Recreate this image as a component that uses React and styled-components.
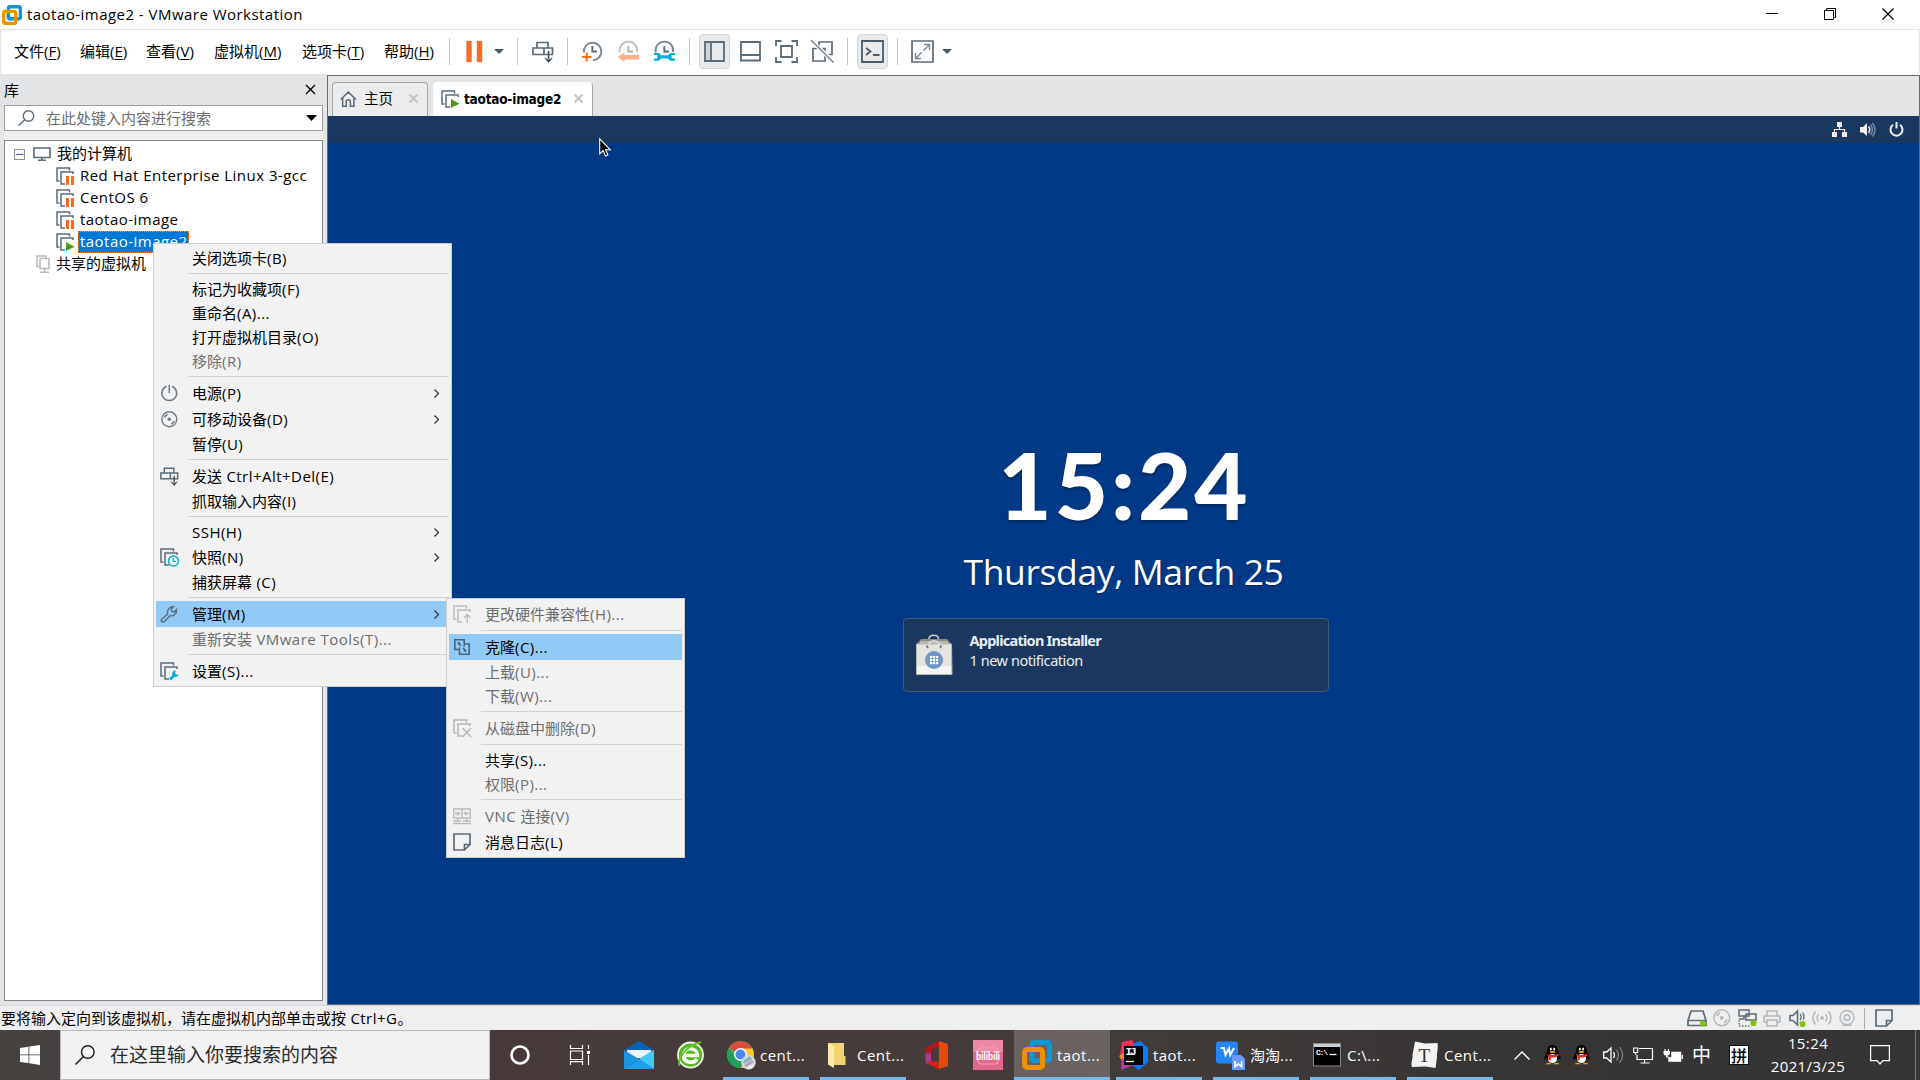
import React from 'react';
import styled, { createGlobalStyle } from 'styled-components';

const UI = '"Open Sans", "Noto Sans CJK SC", sans-serif';
const SLATE = '#5b6b78';
const ORANGE = '#ff6a1c';
const CYAN = '#00b2d6';

const Global = createGlobalStyle`
  * { box-sizing: border-box; }
  html, body { margin: 0; padding: 0; overflow: hidden; }
  body { font-family: ${UI}; font-size: 15px; color: #000; background: #fff; }
`;

const Screen = styled.div`
  position: relative;
  display: flex;
  flex-direction: column;
  width: 1920px;
  height: 1080px;
  overflow: hidden;
`;

const Svg = styled.svg`
  display: block;
  flex: none;
  overflow: visible;
  margin-left: ${(p) => p.$l || 0}px;
  margin-top: ${(p) => p.$t || 0}px;
`;

function Icon({ w, h = w, l, t, children, ...rest }) {
  return (
    <Svg width={w} height={h} viewBox={`0 0 ${w} ${h}`} fill="none" $l={l} $t={t} {...rest}>
      {children}
    </Svg>
  );
}

const Label = styled.span`
  flex: none;
  white-space: pre;
  font-size: ${(p) => p.$size || 15}px;
  line-height: 22px;
  margin-left: ${(p) => p.$l || 0}px;
  margin-bottom: ${(p) => p.$b || 0}px;
  color: ${(p) => p.$color || 'inherit'};
`;

/* Latin runs are set a little looser than the Chinese ones. */
const Latin = styled.span`
  letter-spacing: 0.47px;
`;

const mixed = (text) =>
  text.split(/([\x20-\x7e]+)/).map((run, i) => (i % 2 ? <Latin key={i}>{run}</Latin> : run));

/* ---------- title bar ---------- */

const TitleBar = styled.header`
  display: flex;
  align-items: center;
  height: 29px;
  flex: none;
  padding-left: 2px;
  background: #fff;
`;

const WindowButtons = styled.div`
  display: flex;
  margin-left: auto;
  padding: 0 26px 1px 0;
  gap: 46px;
`;

function VmwareLogo({ size, l, t }) {
  return (
    <Svg width={size} height={size} viewBox="0 0 30 30" fill="none" $l={l} $t={t}>
      <rect x="9.6" y="2.6" width="18" height="18" rx="2.6" stroke="#0e97d6" strokeWidth="5" />
      <rect x="2.6" y="9.6" width="18" height="18" rx="2.6" stroke="#f29100" strokeWidth="5" />
      <path d="M9.6 12.500V18a2.6 2.6 0 0 0 2.6 2.6H15" stroke="#0e97d6" strokeWidth="5" />
    </Svg>
  );
}

/* ---------- menu and tool bar ---------- */

const MenuBar = styled.nav`
  display: flex;
  align-items: center;
  flex: none;
  height: 45px;
  padding: 0 0 1px 13px;
  border: 1px solid #e2e2e2;
  border-bottom: 0;
  background: #fff;
`;

const MenuEntry = styled.span`
  flex: none;
  width: ${(p) => p.$w}px;
  margin-bottom: 2px;
  line-height: 22px;
  white-space: nowrap;
  u { text-underline-offset: 2px; text-decoration-thickness: 1px; }
`;

const Divider = styled.i`
  flex: none;
  width: 1px;
  height: 27px;
  margin-left: ${(p) => p.$l || 0}px;
  background: #c6c6c8;
`;

const Toggle = styled.span`
  display: flex;
  align-items: center;
  justify-content: center;
  flex: none;
  width: 31px;
  height: 35px;
  margin-left: ${(p) => p.$l}px;
  border: 1px solid #d4d5d7;
  border-radius: 4px;
  background: #e9eaec;
`;

const Caret = ({ l, color = '#4b5a66', w = 10, h = 5 }) => (
  <Icon w={w} h={h} l={l}>
    <path d={`M0 0H${w}L${w / 2} ${h}Z`} fill={color} />
  </Icon>
);

function SendKeys({ w = 22, l }) {
  return (
    <Svg width={w} height={w} viewBox="0 0 22 22" fill="none" $l={l}>
      <path d="M5 6.500V1.500h11v5M1 7h19.500v6.500H1zM12 7v6.500" stroke={SLATE} strokeWidth="1.700" />
      <path d="M16.500 10v8" stroke="#44535f" strokeWidth="1.600" />
      <path d="M12 16.500l4.500 2 4.500-2-4.500 5.500z" fill="#44535f" />
    </Svg>
  );
}

function ClockIcon({ kind, l }) {
  const faded = kind === 'back';
  return (
    <Icon w={21} h={21} l={l}>
      {kind === 'add' ? (
        <path d="M1.800 11.500A8.800 8.800 0 1 1 11 19.300" stroke="#7c8790" strokeWidth="1.900" />
      ) : (
        <path d="M1.800 11.500A8.800 8.800 0 1 1 19 11" stroke={faded ? '#bcc1c5' : '#7c8790'} strokeWidth="1.900" />
      )}
      <path d="M10.300 5V10.500H15" stroke={faded ? '#a9b0b5' : SLATE} strokeWidth="1.800" />
      {kind === 'add' && <path d="M0 16h9.500M4.700 11.500v9" stroke={ORANGE} strokeWidth="1.900" />}
      {faded && <path d="M0 16l6.500-5v3H21v4.500H6.500V21z" fill="#ffb08c" />}
      {kind === 'manage' && (
        <path d="M0 12h5l2 2.300h7l2-2.300h5v2h-3.300v3.500H21v2.300h-5l-2-2.300H7l-2 2.300H0v-2.300h3.300V14H0z" fill={CYAN} />
      )}
    </Icon>
  );
}

function ToolBar() {
  return (
    <>
      <Divider />
      <Icon w={17} h={21} l={16}>
        <path d="M.5 0h5v21h-5zM11 0h5v21h-5z" fill={ORANGE} stroke="#c98b6a" strokeWidth=".5" />
      </Icon>
      <Caret l={11} />
      <Divider $l={13} />
      <SendKeys l={14} />
      <Divider $l={13} />
      <ClockIcon kind="add" l={14} />
      <ClockIcon kind="back" l={15} />
      <ClockIcon kind="manage" l={15} />
      <Divider $l={14} />
      <Toggle $l={9}>
        <Icon w={21} h={21}>
          <path d="M1 1h19v19H1zM7 1v19" stroke={SLATE} strokeWidth="1.800" />
          <path d="M2 2h4v17H2z" fill="#d3d6d9" />
        </Icon>
      </Toggle>
      <Icon w={21} h={21} l={10}>
        <path d="M1 1h19v18.500H1zM1 14h19" stroke={SLATE} strokeWidth="1.800" />
      </Icon>
      <Icon w={23} h={23} l={14}>
        <path d="M1 6V1h5.500M16.500 1H22v5M22 17v5h-5.500M6.500 22H1v-5" stroke={SLATE} strokeWidth="1.800" />
        <path d="M6 6h11v11H6z" stroke={SLATE} strokeWidth="1.800" />
      </Icon>
      <Icon w={23} h={23} l={13}>
        <path d="M8 6V2h13v12.500h-5M2 8.500h12v12.500H2zM9 9h5v5" stroke={SLATE} strokeWidth="1.700" />
        <path d="M1 1l21.500 21" stroke="#fff" strokeWidth="4" />
        <path d="M0 0l22.500 22.500" stroke="#7c8790" strokeWidth="1.600" />
      </Icon>
      <Divider $l={13} />
      <Toggle $l={9}>
        <Icon w={23} h={23}>
          <path d="M1 1h21v21H1z" stroke="#4b5c69" strokeWidth="1.800" />
          <path d="M5 8l4.500 3.500L5 15M12 15h6.500" stroke="#4b5c69" strokeWidth="1.800" />
        </Icon>
      </Toggle>
      <Divider $l={9} />
      <Icon w={23} h={23} l={13}>
        <path d="M1 1h21v21H1z" stroke={SLATE} strokeWidth="1.700" />
        <path d="M13 4.500h5.500V10M18.500 4.500L12.500 10.500M10 18.500H4.500V13M4.500 18.500l6-6" stroke="#7c8790" strokeWidth="1.400" />
      </Icon>
      <Caret l={8} />
    </>
  );
}

/* ---------- library ---------- */

const Body = styled.div`
  display: flex;
  flex: none;
  height: 931px;
`;

const Library = styled.aside`
  display: flex;
  flex-direction: column;
  flex: none;
  width: 327px;
  padding: 0 4px 4px;
  background: #e3e4e6;
`;

const LibraryHead = styled.div`
  display: flex;
  align-items: center;
  justify-content: space-between;
  height: 31px;
  padding-right: 8px;
`;

const SearchField = styled.div`
  display: flex;
  align-items: center;
  height: 26px;
  padding-left: 13px;
  border: 1px solid #9d9fa3;
  background: #fff;
`;

const SearchGap = styled.div`
  height: 9px;
  background: #efefef;
`;

const Tree = styled.div`
  flex: 1;
  padding-top: 2px;
  border: 1px solid #828790;
  background: #fff;
`;

const TreeRow = styled.div`
  display: flex;
  align-items: center;
  height: 22px;
  padding-left: ${(p) => p.$indent}px;
`;

const Expander = styled.span`
  display: flex;
  align-items: center;
  justify-content: center;
  width: 11px;
  height: 11px;
  margin-right: 8px;
  border: 1px solid #919191;
  background: #fafafa;
  &::after { content: ''; width: 7px; height: 1px; background: #3b5bb5; }
`;

const TreeName = styled.span`
  margin-left: 4px;
  padding: 0 1px 0 2px;
  height: 22px;
  line-height: 21px;
  white-space: nowrap;
  color: ${(p) => (p.$selected ? '#fff' : '#000')};
  background: ${(p) => (p.$selected ? '#0078d7' : 'transparent')};
  outline: ${(p) => (p.$selected ? '1px dotted #ff8728' : 'none')};
  outline-offset: -1px;
`;

function VmIcon({ state, l = 0, color = SLATE }) {
  return (
    <Icon w={18} h={18} l={l}>
      <path d="M13.500 3.500V1H1v13h2.500" stroke={color} strokeWidth="1.500" />
      <path d="M17 7V5H5v12h4" stroke={color} strokeWidth="1.500" />
      {state === 'paused' && <path d="M10 9h3v9h-3zM15 9h3v9h-3z" fill={ORANGE} />}
      {state === 'running' && <path d="M10 9l8.500 4.700L10 18z" fill="#4a9a12" />}
      {state === 'upgrade' && (
        <>
          <path d="M10 8h9v10h-9z" fill="#f2f2f2" />
          <path d="M14.200 18v-8M11 12.800l3.200-3.300 3.200 3.300" stroke={color} strokeWidth="1.500" />
        </>
      )}
      {state === 'remove' && (
        <>
          <path d="M9 8h9v10H9z" fill="#f2f2f2" />
          <path d="M9.500 9l8.500 9M18 9l-8.500 9" stroke={color} strokeWidth="1.400" />
        </>
      )}
      {state === 'snapshot' && (
        <>
          <circle cx="13.500" cy="13" r="5" fill="#f2f2f2" stroke={CYAN} strokeWidth="1.500" />
          <path d="M13.300 10v3.300H16" stroke={CYAN} strokeWidth="1.300" />
        </>
      )}
      {state === 'settings' && (
        <>
          <path d="M9 8.500h9v10H9z" fill="#f2f2f2" />
          <path d="M10 17.500l5-5" stroke={CYAN} strokeWidth="2.600" />
          <path d="M16 8.700a3.200 3.200 0 1 0 2.500 3.300l-2 .8-1.500-1.500z" fill={CYAN} />
        </>
      )}
    </Icon>
  );
}

const machines = [
  { name: 'Red Hat Enterprise Linux 3-gcc', state: 'paused' },
  { name: 'CentOS 6', state: 'paused' },
  { name: 'taotao-image', state: 'paused' },
  { name: 'taotao-image2', state: 'running', selected: true },
];

function LibraryPane() {
  return (
    <Library>
      <LibraryHead>
        <Label>库</Label>
        <Icon w={9} h={9}>
          <path d="M0 0l9 9M9 0L0 9" stroke="#000" strokeWidth="1.300" />
        </Icon>
      </LibraryHead>
      <SearchField>
        <Icon w={17} h={16}>
          <circle cx="10.500" cy="6" r="5.200" stroke={SLATE} strokeWidth="1.400" />
          <path d="M6.500 10L.5 15.500" stroke={SLATE} strokeWidth="1.500" />
        </Icon>
        <Label $l={11} $color="#6d6d6d">在此处键入内容进行搜索</Label>
        <Caret l={95} w={11} h={6} color="#000" />
      </SearchField>
      <SearchGap />
      <Tree>
        <TreeRow $indent={9}>
          <Expander />
          <Icon w={18} h={14}>
            <path d="M1 1h16v9.500H1zM5 13.300h8M9 10.500v3" stroke={SLATE} strokeWidth="1.600" />
          </Icon>
          <TreeName>我的计算机</TreeName>
        </TreeRow>
        {machines.map((m) => (
          <TreeRow key={m.name} $indent={51}>
            <VmIcon state={m.state} />
            <TreeName $selected={m.selected}>{mixed(m.name)}</TreeName>
          </TreeRow>
        ))}
        <TreeRow $indent={31}>
          <Icon w={14} h={18}>
            <path d="M3 11.500H1V1h9v2M4 3.500h9v10H4zM8.500 13.500V17M4 17.300h9" stroke="#b3b9bd" strokeWidth="1.500" />
          </Icon>
          <TreeName>共享的虚拟机</TreeName>
        </TreeRow>
      </Tree>
    </Library>
  );
}

/* ---------- console ---------- */

const Console = styled.main`
  display: flex;
  flex-direction: column;
  flex: 1;
  margin-top: 1px;
  border: 1px solid #69676b;
`;

const Tabs = styled.div`
  display: flex;
  align-items: flex-end;
  flex: none;
  height: 40px;
  padding-left: 4px;
  background: #e3e4e6;
`;

const Tab = styled.div`
  display: flex;
  align-items: center;
  width: ${(p) => p.$w}px;
  height: 34px;
  margin-right: 5px;
  padding: 0 0 2px 7px;
  border: 1px solid ${(p) => (p.$active ? '#fff' : '#a4a6aa')};
  border-right-color: #a4a6aa;
  border-bottom: 0;
  border-radius: 4px 4px 0 0;
  background: ${(p) => (p.$active ? '#fff' : '#ebeced')};
`;

const TabTitle = styled.b`
  flex: none;
  width: 97px;
  margin-left: 5px;
  font: 700 13.500px/20px "DejaVu Sans Condensed", "DejaVu Sans", sans-serif;
  font-stretch: condensed;
  letter-spacing: -0.22px;
  white-space: nowrap;
`;

const CloseX = ({ l }) => (
  <Icon w={9} h={9} l={l}>
    <path d="M.5 .5l8 8M8.500 .5l-8 8" stroke="#c3c4c6" strokeWidth="1.900" />
  </Icon>
);

const Guest = styled.section`
  display: flex;
  flex-direction: column;
  align-items: center;
  flex: 1;
  background: #003a87;
  color: #fff;
`;

const GuestBar = styled.div`
  display: flex;
  align-items: center;
  justify-content: flex-end;
  align-self: stretch;
  flex: none;
  height: 27px;
  padding-right: 15px;
  gap: 13px;
  background: #1a385f;
`;

const Clock = styled.div`
  margin: 287px 0 0 2px;
  height: 110px;
  line-height: 110px;
  font-family: Lato, sans-serif;
  font-weight: 900;
  font-size: 92px;
  letter-spacing: 3px;
  text-shadow: 0 2px 3px rgba(0, 0, 0, 0.35);
`;

const DateLine = styled.div`
  height: 44px;
  margin-top: 9px;
  line-height: 44px;
  font-family: "Open Sans", sans-serif;
  font-size: 35.500px;
  letter-spacing: -0.38px;
  white-space: nowrap;
  text-shadow: 0 1px 2px rgba(0, 0, 0, 0.4);
`;

const Notice = styled.div`
  display: flex;
  width: 426px;
  height: 74px;
  margin: 25px 16px 0 0;
  padding: 15px 0 0 12px;
  border: 1px solid #41587b;
  border-radius: 4px;
  background: #1a385f;
`;

const NoticeText = styled.div`
  display: flex;
  flex-direction: column;
  margin: -4px 0 0 18px;
  font-family: "Noto Sans", sans-serif;
  font-size: 14.500px;
  line-height: 20px;
  color: #e9ecef;
  b { letter-spacing: -0.75px; font-weight: 700; }
  span { letter-spacing: -0.45px; }
`;

function ShoppingBag() {
  return (
    <Icon w={36} h={41}>
      <path d="M5 5h26l5 6H0z" fill="#8d8d88" />
      <path d="M4 7h28v4H4z" fill="#b9b9b4" />
      <path d="M.5 10h35L36 40.500H.5z" fill="#e4e4e0" stroke="#b7b8b0" />
      <path d="M1 32h34v8H1z" fill="#f5f5f3" />
      <path d="M13 5c0-5 9.500-5 9.500 0" stroke="#c9cac4" strokeWidth="1.600" />
      <path d="M12 13c0-8 12-8 12 0" stroke="#d9dad5" strokeWidth="2" />
      <path d="M10.500 11.500l1.500 2.500M25.500 11.500L24 14" stroke="#777" strokeWidth="1.600" />
      <circle cx="18" cy="26" r="9" fill="#7296c8" />
      {[0, 1, 2].map((r) => [0, 1, 2].map((c) => (
        <rect key={`${r}${c}`} x={14 + c * 3} y={22 + r * 3} width="2.200" height="2.200" fill="#fff" />
      )))}
    </Icon>
  );
}

function ConsolePane() {
  return (
    <Console>
      <Tabs>
        <Tab $w={96}>
          <Icon w={17} h={16}>
            <path d="M.7 8.500L8.300 1l7.600 7.500M2.700 7v8.200h3.500v-4.500c0-2.600 4.200-2.600 4.200 0v4.500h3.500V7" stroke={SLATE} strokeWidth="1.500" />
          </Icon>
          <Label $l={7} $size={14.5}>主页</Label>
          <CloseX l={16} />
        </Tab>
        <Tab $w={160} $active>
          <VmIcon state="running" />
          <TabTitle>taotao-image2</TabTitle>
          <CloseX l={13} />
        </Tab>
      </Tabs>
      <Guest>
        <GuestBar>
          <Icon w={15} h={15}>
            <path d="M5 0h5v5H5zM0 10h5v5H0zM10 10h5v5h-5z" fill="#f0f0ee" />
            <path d="M7.500 5v3M2.500 10V7.500h10V10" stroke="#f0f0ee" strokeWidth="1.200" />
          </Icon>
          <Icon w={16} h={14}>
            <path d="M0 4h3l4-4v13L3 9.500H0z" fill="#f0f0ee" />
            <path d="M8.500 3.500c1.500 2 1.500 4.500 0 6.500" stroke="#f0f0ee" strokeWidth="1.500" />
            <path d="M10.500 1.500c2.500 3 2.500 7.500 0 10.500M12.500 0c3.300 4 3.300 9.500 0 13.500" stroke="#7688a0" strokeWidth="1.500" />
          </Icon>
          <Icon w={15} h={15}>
            <path d="M4 2.800a6 6 0 1 0 7 0M7.500 0v6.500" stroke="#f0f0ee" strokeWidth="2" />
          </Icon>
        </GuestBar>
        <Clock>15:24</Clock>
        <DateLine>Thursday, March 25</DateLine>
        <Notice>
          <ShoppingBag />
          <NoticeText>
            <b>Application Installer</b>
            <span>1 new notification</span>
          </NoticeText>
        </Notice>
      </Guest>
    </Console>
  );
}

/* ---------- context menus ---------- */

const Menu = styled.div`
  position: absolute;
  left: ${(p) => p.$x}px;
  top: ${(p) => p.$y}px;
  width: ${(p) => p.$w}px;
  padding: 2px;
  border: 1px solid #cccccc;
  background: #f2f2f2;
`;

const MenuRow = styled.div`
  display: flex;
  align-items: center;
  height: ${(p) => (p.$tall ? 26 : 24)}px;
  padding-right: 10px;
  color: ${(p) => (p.$off ? '#6d6d6d' : '#000')};
  background: ${(p) => (p.$hot ? '#91c9f7' : 'transparent')};
`;

const IconCell = styled.span`
  display: flex;
  align-items: center;
  flex: none;
  width: ${(p) => p.$w}px;
  padding-left: 4px;
`;

const RowText = styled.span`
  flex: 1;
  margin-bottom: 1px;
  line-height: 24px;
  white-space: pre;
`;

const Rule = styled.div`
  height: 7px;
  margin-left: 32px;
  padding-top: 3px;
  &::after { content: ''; display: block; height: 1px; background: #d2d2d2; }
`;

const PowerIcon = () => (
  <Icon w={17} h={17} l={1}>
    <path d="M5.500 1.300a7.400 7.400 0 1 0 5.500 0M8.300 0v8" stroke="#6f7c87" strokeWidth="1.500" />
  </Icon>
);

const DiscIcon = ({ color = '#6f7c87', size = 17, l = 1 }) => (
  <Svg width={size} height={size} viewBox="0 0 17 17" fill="none" $l={l}>
    <circle cx="8.300" cy="8.300" r="7.500" stroke={color} strokeWidth="1.400" />
    <circle cx="8.300" cy="8.300" r="1.800" fill={color} />
    <path d="M3.500 6.500a5 5 0 0 1 3-3M13.200 10a5 5 0 0 1-3 3" stroke={color} strokeWidth="1.600" />
  </Svg>
);

const WrenchIcon = () => (
  <Icon w={18} h={18}>
    <path
      d="M1.500 14.500l6-5.500c-.8-3.500 1.800-7.500 6-7.500l-2.300 2.700.8 2.300 2.300.5 2.200-2.500c.6 4-3 7-6.500 6.300l-5.300 5.400c-2 1.800-4.500-.3-3.200-1.700z"
      stroke={SLATE} strokeWidth="1.400"
    />
  </Icon>
);

const CloneIcon = () => (
  <Icon w={16} h={16} l={1}>
    <path d="M5.500 10.500H.800V.800h9.400V5M10.200 5h5v10.200H5.500v-4.700" stroke="#48637a" strokeWidth="1.600" />
    <path d="M3.200 3.200h3v3zM12.800 12.800h-3v-3z" fill="#48637a" />
    <path d="M4 4l3 3M9 9l3 3" stroke="#48637a" strokeWidth="1.600" />
    <path d="M10.200 5v3M5.500 10.500v-2" stroke="#48637a" strokeWidth="1.300" />
  </Icon>
);

const VncIcon = () => (
  <Icon w={18} h={16}>
    <path d="M.8 1h16.400v9H.8zM9 1v9" stroke="#b9bcbe" strokeWidth="1.500" />
    <path d="M2 5.500h4.500M16 5.500h-4.500M4.500 3.500l2 2-2 2M13.500 3.500l-2 2 2 2M4.500 10v3M13.500 10v3M0 13h8M10 13h8M0 15.500h18" stroke="#b9bcbe" strokeWidth="1.300" />
  </Icon>
);

const NoteIcon = () => (
  <Icon w={18} h={18}>
    <path d="M1 1h16v10.500L11.500 17H1zM17 11.500h-5.500V17" stroke={SLATE} strokeWidth="1.700" />
  </Icon>
);

const contextItems = [
  { t: '关闭选项卡(B)' }, null,
  { t: '标记为收藏项(F)' }, { t: '重命名(A)...' }, { t: '打开虚拟机目录(O)' }, { t: '移除(R)', off: true }, null,
  { t: '电源(P)', icon: <PowerIcon />, more: true },
  { t: '可移动设备(D)', icon: <DiscIcon />, more: true },
  { t: '暂停(U)' }, null,
  { t: '发送 Ctrl+Alt+Del(E)', icon: <SendKeys w={19} /> },
  { t: '抓取输入内容(I)' }, null,
  { t: 'SSH(H)', more: true },
  { t: '快照(N)', icon: <VmIcon state="snapshot" />, more: true },
  { t: '捕获屏幕 (C)' }, null,
  { t: '管理(M)', icon: <WrenchIcon />, more: true, hot: true },
  { t: '重新安装 VMware Tools(T)...', off: true }, null,
  { t: '设置(S)...', icon: <VmIcon state="settings" /> },
];

const manageItems = [
  { t: '更改硬件兼容性(H)...', off: true, icon: <VmIcon state="upgrade" color="#b9bcbe" /> }, null,
  { t: '克隆(C)...', hot: true, icon: <CloneIcon /> },
  { t: '上载(U)...', off: true }, { t: '下载(W)...', off: true }, null,
  { t: '从磁盘中删除(D)', off: true, icon: <VmIcon state="remove" color="#b3b6b8" /> }, null,
  { t: '共享(S)...' }, { t: '权限(P)...', off: true }, null,
  { t: 'VNC 连接(V)', off: true, icon: <VncIcon /> },
  { t: '消息日志(L)', icon: <NoteIcon /> },
];

function PopupMenu({ x, y, w, items }) {
  return (
    <Menu $x={x} $y={y} $w={w}>
      {items.map((it, i) =>
        it === null ? (
          <Rule key={i} />
        ) : (
          <MenuRow key={i} $tall={!!it.icon} $off={it.off} $hot={it.hot}>
            <IconCell $w={36}>{it.icon}</IconCell>
            <RowText>{mixed(it.t)}</RowText>
            {it.more && (
              <Icon w={5} h={9}>
                <path d="M.5 .5l4 4-4 4" stroke="#333" strokeWidth="1.200" />
              </Icon>
            )}
          </MenuRow>
        ),
      )}
    </Menu>
  );
}

const Pointer = styled(Svg)`
  position: absolute;
  left: 599px;
  top: 138px;
`;

/* ---------- status bar ---------- */

const StatusBar = styled.footer`
  display: flex;
  align-items: center;
  flex: none;
  height: 25px;
  padding: 0 27px 0 1px;
  border-top: 1px solid #d7d8da;
  background: #efefef;
`;

const DeviceIcons = styled.div`
  display: flex;
  align-items: center;
  margin-left: auto;
`;

const OnDot = ({ x, y }) => <circle cx={x} cy={y} r="3.100" fill="#7ec60d" />;
const PALE = '#b0b7bc';

const StatusSplit = styled.i`
  width: 1px;
  height: 21px;
  margin: 0 10px 0 9px;
  background: #a9abad;
`;

function Devices() {
  return (
    <DeviceIcons>
      <Icon w={20} h={17}>
        <path d="M1 10.500L4 1h12l3 9.500M1 10.500h18V15.500H1z" stroke={SLATE} strokeWidth="1.700" />
        <OnDot x={16} y={13.5} />
      </Icon>
      <DiscIcon color={PALE} size={18} l={6} />
      <Icon w={19} h={18} l={7}>
        <path d="M1 1h10v6H1zM6 7v3H1M8 5h10v6H8z" stroke={SLATE} strokeWidth="1.500" />
        <path d="M1 11v6h10" stroke={SLATE} strokeWidth="1.300" strokeDasharray="1.500 1.500" />
        <OnDot x={15.5} y={14} />
      </Icon>
      <Icon w={18} h={17} l={6}>
        <path d="M4 6V1h10v5M4 12H1V6h16v6h-3M4 10h10v6H4z" stroke={PALE} strokeWidth="1.500" />
      </Icon>
      <Icon w={18} h={17} l={8}>
        <path d="M1 5.500h3L8.500 1v14L4 10.500H1z" stroke={SLATE} strokeWidth="1.600" />
        <path d="M11 4c1.500 2 1.500 4 0 6M13.500 2.500c2 3 2 5 .5 7" stroke={SLATE} strokeWidth="1.300" />
        <OnDot x={13.5} y={14} />
      </Icon>
      <Icon w={20} h={14} l={5}>
        <circle cx="10" cy="7" r="1.800" fill={PALE} />
        <path d="M6.500 3.500c-1.800 2-1.800 5 0 7M13.500 3.500c1.800 2 1.800 5 0 7M3.500 .5c-3.300 3.500-3.300 9.500 0 13M16.500 .5c3.300 3.500 3.300 9.500 0 13" stroke={PALE} strokeWidth="1.500" />
      </Icon>
      <Icon w={16} h={16} l={7}>
        <circle cx="8" cy="7.500" r="7" stroke={PALE} strokeWidth="1.400" />
        <circle cx="8" cy="7.500" r="2.800" stroke={PALE} strokeWidth="1.500" />
        <path d="M3 15.300h10" stroke={PALE} strokeWidth="1.300" />
      </Icon>
      <StatusSplit />
      <NoteIcon />
    </DeviceIcons>
  );
}

/* ---------- taskbar ---------- */

const Taskbar = styled.footer`
  display: flex;
  flex: none;
  height: 50px;
  color: #fff;
  background: linear-gradient(90deg, #454340 0, #454140 60px, #47393a 490px, #463b3b 800px, #403b39 1200px, #383535 1450px, #353334 1920px);
`;

const Start = styled.div`
  display: flex;
  align-items: center;
  justify-content: center;
  width: 60px;
`;

const TaskSearch = styled.div`
  display: flex;
  align-items: center;
  width: 430px;
  padding-left: 14px;
  border: 1px solid #b9b9b9;
  background: #f2f2f2;
`;

const Cell = styled.div`
  display: flex;
  align-items: center;
  flex: none;
  width: ${(p) => p.$w}px;
`;

const Task = styled.div`
  display: flex;
  align-items: center;
  flex: none;
  width: ${(p) => p.$w || 86}px;
  margin-right: ${(p) => p.$r ?? 11}px;
  border-bottom: 3px solid #76b9ed;
  padding-top: 3px;
  background: ${(p) => (p.$active ? 'linear-gradient(90deg, #6a605f, #6a6361)' : 'transparent')};
`;

const TaskTitle = styled.span`
  margin-left: auto;
  width: ${(p) => p.$w}px;
  line-height: 24px;
  font-size: 15px;
  white-space: nowrap;
`;

const TaskName = ({ w = 49, children }) => <TaskTitle $w={w}>{mixed(children)}</TaskTitle>;

const Tray = styled.div`
  display: flex;
  align-items: center;
  flex: 1;
  padding-left: 21px;
`;

const ImeBox = styled.span`
  display: flex;
  align-items: center;
  justify-content: center;
  width: 20px;
  height: 20px;
  margin-left: 18px;
  border: 1px solid #111;
  background: #fff;
  color: #000;
  font: 500 16px/18px "Noto Sans CJK SC", sans-serif;
`;

const DateTime = styled.div`
  display: flex;
  flex-direction: column;
  align-items: center;
  width: 80px;
  margin-left: 19px;
  line-height: 23px;
  font-size: 15px;
  letter-spacing: 0.4px;
`;

const DesktopEdge = styled.i`
  width: 1px;
  height: 50px;
  margin-left: 25px;
  background: #7b7979;
`;

const IconText = styled.text`
  font-family: ${(p) => p.$font};
  font-size: ${(p) => p.$size}px;
  font-weight: ${(p) => p.$weight || 400};
`;

const Mail = () => (
  <Icon w={30} h={28} l={14}>
    <path d="M0 9L15 0l15 9z" fill="#0762b3" />
    <path d="M3 9h24v8H3z" fill="#f2f2f2" />
    <path d="M0 9l15 9L0 28z" fill="#1b94e0" />
    <path d="M30 9v19L15 18z" fill="#2ab5f2" />
    <path d="M30 9L15 18l15 10z" fill="#43c9f8" />
    <path d="M0 28L15 18l15 10z" fill="#1e9fea" />
  </Icon>
);

const GreenBrowser = () => (
  <Icon w={28} h={28} l={12}>
    <circle cx="13.500" cy="14" r="12.500" fill="#56b81e" stroke="#f1f5ee" strokeWidth="1.800" />
    <path d="M6.500 14.500h14c0-8.500-14-9.500-14 0 0 8 10.500 8.500 13.500 3.500" stroke="#fff" strokeWidth="3.600" />
    <path d="M2.500 25C0 18 9 4.500 24 1" stroke="#5fc322" strokeWidth="1.800" />
  </Icon>
);

const Chrome = () => (
  <Icon w={29} h={29} l={4}>
    <circle cx="13.500" cy="13.500" r="13.500" fill="#4caf50" />
    <path d="M13.500 13.500L1.800 6.800A13.500 13.500 0 0 1 25.200 7z" fill="#dd4b3e" />
    <path d="M13.500 7.500h12A13.500 13.500 0 0 1 13.500 27l5.500-10z" fill="#fcc934" />
    <path d="M1.800 6.800A13.500 13.500 0 0 0 13.500 27l5-9-10-1z" fill="#22a05a" />
    <circle cx="13.500" cy="13.500" r="6.500" fill="#fff" />
    <circle cx="13.500" cy="13.500" r="5" fill="#4a86f0" />
    <circle cx="21.500" cy="21.500" r="7.200" fill="#d3dcdc" />
    <path d="M16 20l7-5 2 3-8 5z" fill="#83b4c8" />
    <path d="M17 24l8-5 2 2-8 5z" fill="#c49ac0" />
    <path d="M20 26l7-2-3 4z" fill="#f4f4f4" />
  </Icon>
);

const Folder = () => (
  <Icon w={18} h={25} l={8}>
    <path d="M0 0h16v13h1.500v9H2z" fill="#f3d272" />
    <path d="M0 0l6 3v22l-6-3.500z" fill="#ffe9a6" />
  </Icon>
);

const Office = () => (
  <Icon w={23} h={28} l={19}>
    <path d="M0 7L14 0v6L6 9v12l-5 2z" fill="#b5151c" />
    <path d="M0 13l6-1v8l-5 3z" fill="#a83c8a" />
    <path d="M1 22l5-2 8 1v7z" fill="#d5221c" />
    <path d="M14 0l9 3v22l-9 3z" fill="#e64a0a" />
  </Icon>
);

const Bilibili = () => (
  <Icon w={30} h={30} l={8}>
    <rect width="30" height="30" fill="#e0678d" />
    <rect width="30" height="12" fill="#ee86a5" />
    <rect x="5" y="8" width="20" height="16" rx="3" stroke="#ef9fb6" strokeWidth="1.200" />
    <path d="M11 8L8.500 5M19 8l2.500-3" stroke="#ef9fb6" strokeWidth="1.200" />
    <IconText x="3" y="19.500" fill="#fff" textLength="24" lengthAdjust="spacingAndGlyphs" $font="Lato, sans-serif" $size={10.5} $weight={700}>bilibili</IconText>
  </Icon>
);

const Idea = () => (
  <Icon w={30} h={30} l={3}>
    <path d="M3 2l10-2 4 6-8 12-8-2z" fill="#fe2d5c" />
    <path d="M0 16l5-4 4 6-6 3z" fill="#f58a1f" />
    <path d="M14 4l7-3 8 7v14l-9 8-8-6z" fill="#0a7bff" />
    <path d="M3 18l12 7-13 5z" fill="#b93ca8" />
    <rect x="5" y="6" width="19" height="19" fill="#050505" />
    <IconText x="6.500" y="15" fill="#fff" $font='"Liberation Mono", monospace' $size={11} $weight={700} textLength="11">IJ</IconText>
    <path d="M7 21.500h8" stroke="#fff" strokeWidth="1.300" />
  </Icon>
);

const Wps = () => (
  <Icon w={30} h={30} l={3}>
    <rect x="0" y="1.500" width="22" height="22" rx="3" fill="#2485f7" />
    <path d="M4.500 8h3.500l1.500 7L13 8.500l1.200 6.500L18 8" stroke="#fff" strokeWidth="2" />
    <path d="M16 15h9l4 4v11H16z" fill="#6a9bf8" />
    <path d="M19 21v5.500l3.300-2.500 3.300 2.500V21" stroke="#fff" strokeWidth="1.700" />
  </Icon>
);

const Cmd = () => (
  <Icon w={28} h={24} l={3}>
    <rect x=".5" y=".5" width="27" height="22.500" fill="#000" stroke="#8a8a8a" />
    <path d="M1 1h26v3H1z" fill="#c9d0d8" />
    <IconText x="3" y="12" fill="#fff" $font='"Liberation Mono", monospace' $size={8} $weight={700} textLength="12">C:\</IconText>
    <path d="M16.500 11.500h7" stroke="#fff" strokeWidth="1.300" />
  </Icon>
);

const Typora = () => (
  <Icon w={28} h={28} l={4}>
    <path d="M4 .5l10 2 12.500-.5c1 6-1 10-.5 14l-1.500 11-10-1.500-13.500.5c-1.500-4 1-8 .5-12z" fill="#f3f3f3" />
    <IconText x="7.500" y="20.500" fill="#333" $font='"Liberation Serif", serif' $size={19}>T</IconText>
  </Icon>
);

const Penguin = ({ l }) => (
  <Icon w={17} h={20} l={l}>
    <path d="M8.500 0C4.500 0 3 3 3 7c-1.500 2-3.300 5-2.500 8l2-1.500c1 4 11 4 12 0l2 1.500c.7-3-1-6-2.500-8 0-4-1.500-7-5.500-7z" fill="#050505" />
    <ellipse cx="8.500" cy="13.500" rx="4.600" ry="4.500" fill="#fff" />
    <ellipse cx="6.800" cy="4" rx="1" ry="1.500" fill="#fff" />
    <ellipse cx="10.200" cy="4" rx="1" ry="1.500" fill="#fff" />
    <ellipse cx="8.500" cy="7" rx="3" ry=".9" fill="#f5a300" />
    <path d="M2.800 8.500c4 2 7.500 2 11.400 0l.6 2.200c-3 1.700-5 1.900-8 1.700v3l-2.500-.5v-3z" fill="#e8281e" />
    <path d="M1.500 19.300c1-1.600 5-1.600 6 0zM9.500 19.300c1-1.600 5-1.600 6 0z" fill="#f5a300" />
  </Icon>
);

function TaskbarPane() {
  return (
    <Taskbar>
      <Start>
        <Icon w={20} h={20}>
          <path d="M0 3l8.500-1.200v7.700H0zM9.300 1.600L20 0v9.500H9.300zM0 10.300h8.500V18L0 16.900zM9.300 10.300H20V20L9.300 18.300z" fill="#fff" />
        </Icon>
      </Start>
      <TaskSearch>
        <Icon w={20} h={20}>
          <circle cx="12.800" cy="7" r="6.300" stroke="#222" strokeWidth="1.500" />
          <path d="M8.500 11.500L.5 19.500" stroke="#222" strokeWidth="1.600" />
        </Icon>
        <Label $l={15} $size={19} $color="#2b2b2b">在这里输入你要搜索的内容</Label>
      </TaskSearch>
      <Cell $w={60}>
        <Icon w={20} l={20}><circle cx="10" cy="10" r="8.500" stroke="#fff" strokeWidth="2.700" /></Icon>
      </Cell>
      <Cell $w={60}>
        <Icon w={21} h={20} l={20}>
          <path d="M.5 0v3.500h12V0M.5 6h12v8.500H.5zM.5 20v-3.300h12V20M18.500 0v4M18.500 10v10" stroke="#fff" strokeWidth="1.200" />
          <path d="M17 6h3v3h-3z" fill="#fff" />
        </Icon>
      </Cell>
      <Cell $w={55}><Mail /></Cell>
      <Cell $w={58}><GreenBrowser /></Cell>
      <Task><Chrome /><TaskName>cent...</TaskName></Task>
      <Task $r={0}><Folder /><TaskName>Cent...</TaskName></Task>
      <Cell $w={59}><Office /></Cell>
      <Cell $w={49}><Bilibili /></Cell>
      <Task $w={96} $r={6} $active><VmwareLogo size={30} l={8} /><TaskName w={53}>taot...</TaskName></Task>
      <Task><Idea /><TaskName>taot...</TaskName></Task>
      <Task><Wps /><TaskName>淘淘...</TaskName></Task>
      <Task><Cmd /><TaskName>C:\...</TaskName></Task>
      <Task $r={0}><Typora /><TaskName>Cent...</TaskName></Task>
      <Tray>
        <Icon w={16} h={9}><path d="M.5 8.500L8 1l7.500 7.500" stroke="#fff" strokeWidth="1.400" /></Icon>
        <Penguin l={14} />
        <Penguin l={12} />
        <Icon w={20} h={18} l={13}>
          <path d="M.7 6h3L8 2v14l-4.300-4H.7z" stroke="#fff" strokeWidth="1.300" />
          <path d="M10.500 6c1.300 2 1.300 4 0 6" stroke="#fff" strokeWidth="1.200" />
          <path d="M13.500 3.500c2.500 3.500 2.500 7.500 0 11M16.500 1c4 5 4 11 0 16" stroke="#858383" strokeWidth="1.200" />
        </Icon>
        <Icon w={20} h={17} l={10}>
          <path d="M6 1.500h13.500v11H4V8M11.500 12.500v3M7.500 16h9" stroke="#fff" strokeWidth="1.200" />
          <path d="M.7 1h4v4.500h-4zM2.700 5.500V8" stroke="#fff" strokeWidth="1.100" />
        </Icon>
        <Icon w={20} h={13} l={10}>
          <path d="M2 0v2M5.500 0v2M3.700 5v3h2" stroke="#fff" strokeWidth="1.200" />
          <path d="M.5 2h6.500v2c0 2-1.500 2.500-3.200 2.500S.5 6 .5 4z" fill="#fff" />
          <path d="M8.500 3H18v9.500H5.500V8.500H8.500z" fill="#fff" stroke="#fff" strokeWidth=".6" />
          <path d="M19.400 6v4" stroke="#fff" strokeWidth="1.200" />
        </Icon>
        <Label $size={19} $l={9} $b={1}>中</Label>
        <ImeBox>拼</ImeBox>
        <DateTime><span>15:24</span><span>2021/3/25</span></DateTime>
        <Icon w={20} h={20} l={22}>
          <path d="M.6 .6h18.800v15h-6.400L10 19l-3-3.400H.6z" stroke="#fff" strokeWidth="1.200" />
        </Icon>
        <DesktopEdge />
      </Tray>
    </Taskbar>
  );
}

const menus = [
  ['文件', 'F', 66], ['编辑', 'E', 66], ['查看', 'V', 68], ['虚拟机', 'M', 88], ['选项卡', 'T', 82], ['帮助', 'H', 65],
];

export default function App() {
  return (
    <Screen>
      <Global />
      <TitleBar>
        <VmwareLogo size={20} />
        <Label $l={5} $b={2}>{mixed('taotao-image2 - VMware Workstation')}</Label>
        <WindowButtons>
          <Icon w={12}><path d="M0 5.500h12" stroke="#000" /></Icon>
          <Icon w={12}><path d="M.5 2.500h9v9h-9zM2.500 2.500V.5h9v9h-2" stroke="#000" /></Icon>
          <Icon w={12}><path d="M.5 .5l11 11M11.500 .5l-11 11" stroke="#000" strokeWidth="1.200" /></Icon>
        </WindowButtons>
      </TitleBar>
      <MenuBar>
        {menus.map(([name, key, w]) => (
          <MenuEntry key={key} $w={w}>{name}(<u>{key}</u>)</MenuEntry>
        ))}
        <ToolBar />
      </MenuBar>
      <Body>
        <LibraryPane />
        <ConsolePane />
      </Body>
      <StatusBar>
        <Label>{mixed('要将输入定向到该虚拟机，请在虚拟机内部单击或按 Ctrl+G。')}</Label>
        <Devices />
      </StatusBar>
      <TaskbarPane />
      <PopupMenu x={153} y={243} w={299} items={contextItems} />
      <PopupMenu x={446} y={598} w={239} items={manageItems} />
      <Pointer width="12" height="19" viewBox="0 0 12 19" fill="none">
        <path d="M.7 .8v15l3.500-3.300 2.300 5.500 2.400-1-2.300-5.300h4.600z" fill="#000" stroke="#fff" strokeWidth="1.100" />
      </Pointer>
    </Screen>
  );
}
